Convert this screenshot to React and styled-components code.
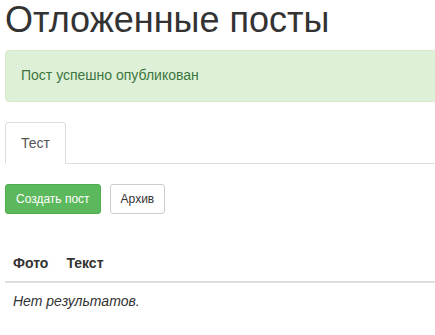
import React from 'react';
import styled, { createGlobalStyle } from 'styled-components';

const GlobalStyle = createGlobalStyle`
    html, body {
        margin: 0;
        padding: 0;
        background: #fff;
        overflow: hidden;
    }
    body {
        font-family: "Liberation Sans", Arial, sans-serif;
        font-size: 14px;
        line-height: 1.42857;
        color: #333;
    }
`

const Page = () => {
    return (
        <>
            <GlobalStyle />
            <Frame>
                <Container>
                    <Title>Отложенные посты</Title>
                    <Alert>Пост успешно опубликован</Alert>
                    <Tabs>
                        <Tab active>Тест</Tab>
                    </Tabs>
                    <Toolbar>
                        <Button primary>Создать пост</Button>
                        <Button>Архив</Button>
                    </Toolbar>
                    <Table>
                        <thead>
                            <tr>
                                <Th first>Фото</Th>
                                <Th wide>Текст</Th>
                            </tr>
                        </thead>
                        <tbody>
                            <tr>
                                <Empty colSpan={2}>Нет результатов.</Empty>
                            </tr>
                        </tbody>
                    </Table>
                </Container>
            </Frame>
        </>
    );
};

const Frame = styled.div`
    width: 100vw;
    height: 100vh;
    overflow: hidden;
`
const Container = styled.div`
    width: 470px;
    padding-left: 5px;
`
const Title = styled.h1`
    margin: 0 0 10px;
    font-size: 36px;
    font-weight: 500;
    line-height: 1.1;
    color: #333;
`
const Alert = styled.div`
    padding: 15px;
    margin-bottom: 20px;
    border: 1px solid #d6e9c6;
    border-radius: 4px;
    background: #dff0d8;
    color: #3c763d;
`
const Tabs = styled.div`
    display: flex;
    border-bottom: 1px solid #ddd;
    margin-bottom: 20px;
`
const Tab = styled.div`
    padding: 10px 15px;
    margin-bottom: -1px;
    line-height: 20px;
    color: #555;
    background: #fff;
    border: 1px solid ${p => (p.active ? '#ddd' : 'transparent')};
    border-bottom-color: transparent;
    border-radius: 4px 4px 0 0;
`
const Toolbar = styled.div`
    display: flex;
    gap: 9px;
    margin-bottom: 31px;
`
const Button = styled.button`
    padding: 5px 10px;
    font-family: inherit;
    font-size: 12px;
    line-height: 1.5;
    border-radius: 3px;
    border: 1px solid ${p => (p.primary ? '#4cae4c' : '#ccc')};
    background: ${p => (p.primary ? '#5cb85c' : '#fff')};
    color: ${p => (p.primary ? '#fff' : '#333')};
`
const Table = styled.table`
    width: 430px;
    border-collapse: collapse;
    border-spacing: 0;
`
const Th = styled.th`
    padding: 8px;
    padding-right: ${p => (p.first ? '10px' : '8px')};
    text-align: left;
    font-weight: bold;
    line-height: 20px;
    white-space: nowrap;
    border-bottom: 2px solid #ddd;
    width: ${p => (p.wide ? '100%' : 'auto')};
`
const Empty = styled.td`
    padding: 8px;
    line-height: 20px;
    font-style: italic;
`

export default Page;
